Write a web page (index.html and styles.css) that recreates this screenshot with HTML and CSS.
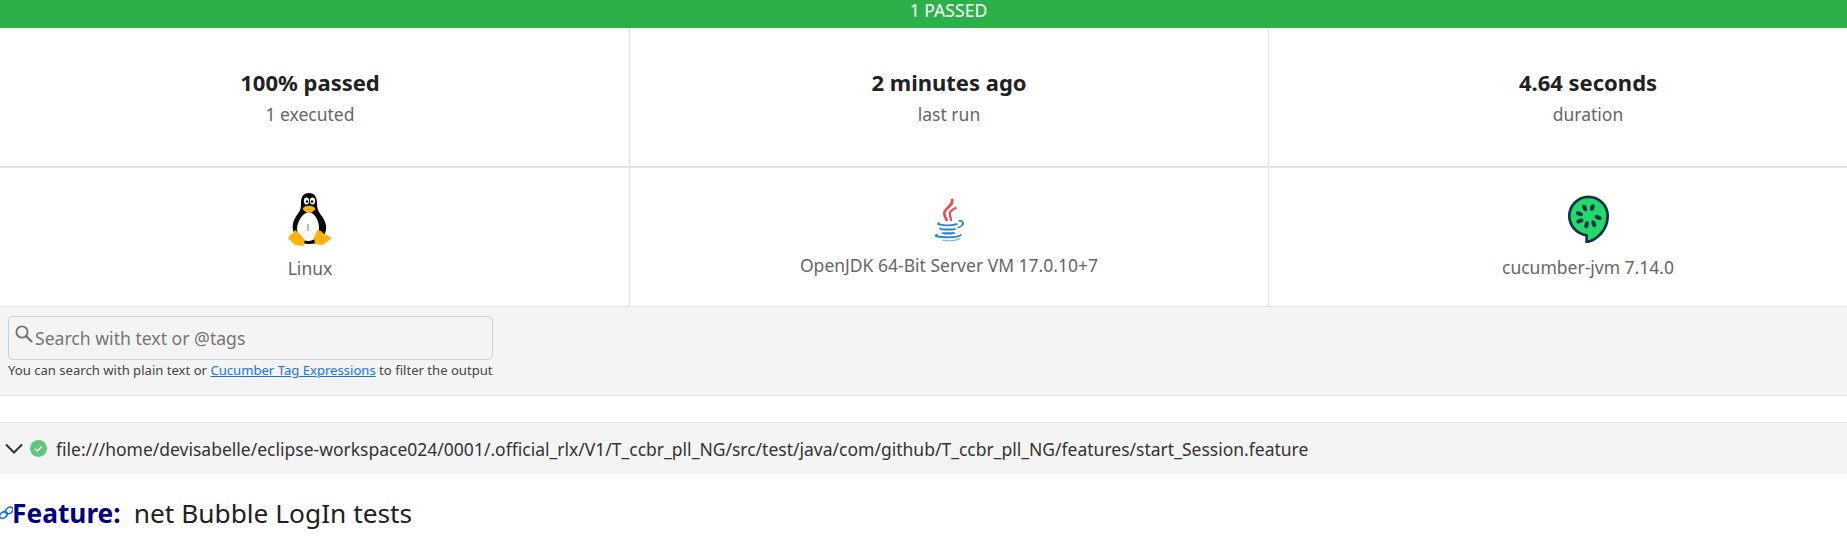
FILE: index.html
```html
<!DOCTYPE html>
<html>
<head>
<meta charset="utf-8">
<title>Cucumber report</title>
<link rel="stylesheet" href="styles.css">
</head>
<body>
<div class="status-bar">1 passed</div>

<div class="summary">
  <div class="cell cell-stat">
    <strong>100% passed</strong>
    <span>1 executed</span>
  </div>
  <div class="cell cell-stat">
    <strong>2 minutes ago</strong>
    <span>last run</span>
  </div>
  <div class="cell cell-stat">
    <strong>4.64 seconds</strong>
    <span>duration</span>
  </div>

  <div class="cell cell-env cell-linux">
    <svg class="logo" width="44" height="54" viewBox="0 0 44 54">
      <path fill="#0b0b0b" d="M21 0C14 0 13 5 13 11c0 5-1 7-4 11-3 4-5 9-4 15l3 9c3 4 9 5 13 5s11-1 14-5l3-9c1-6-2-11-5-15-3-4-4-7-4-12 0-5-2-10-8-10z"/>
      <path fill="#fff" d="M21 19c-7 1-11 9-12 16 0 8 5 13 11 13 7 0 11-5 11-13 0-7-4-15-10-16z"/>
      <ellipse fill="#fff" cx="18.5" cy="8" rx="2.6" ry="3.4"/>
      <ellipse fill="#fff" cx="24.5" cy="8" rx="2.6" ry="3.4"/>
      <circle fill="#111" cx="19" cy="8.5" r="1.3"/>
      <circle fill="#111" cx="24" cy="8.5" r="1.3"/>
      <path fill="#fbb40f" d="M15 15c3-3 9-3 12 0 1 2-4 5-6 5s-7-3-6-5z"/>
      <path fill="#fbb40f" d="M7 37l5 4 5 6-2 6-8-1-7-7 2-3 3-2z"/>
      <path fill="#fbb40f" d="M29 37l4 1 2 2 9 5-9 7-8-1-1-6z"/>
      <path fill="none" stroke="#555" stroke-width="0.8" d="M20 31v7"/>
    </svg>
    <span>Linux</span>
  </div>
  <div class="cell cell-env cell-java">
    <svg class="logo" width="34" height="44" viewBox="0 0 34 46">
      <path fill="none" stroke="#ea4a50" stroke-width="2.8" d="M20 1c3 6-8 10-8 15 0 3 2 5 3 8"/>
      <path fill="none" stroke="#ea4a50" stroke-width="2.3" d="M25 10c-5 2-8 5-7 8 0 2 2 4 1 6"/>
      <path fill="none" stroke="#2a86cf" stroke-width="1.9" d="M7 26c-3 1-1 2 3 2 6 1 13 0 16-1"/>
      <path fill="none" stroke="#2a86cf" stroke-width="1.8" d="M27 24c5-1 6 3 3 5-1 1-3 2-4 2"/>
      <path fill="none" stroke="#2a86cf" stroke-width="2" d="M8 31c-1 2 3 2 8 2 4 0 7 0 8-1"/>
      <path fill="none" stroke="#2a86cf" stroke-width="2.2" d="M10 36c0 1 3 1 6 1 3 0 6 0 7-1"/>
      <path fill="none" stroke="#2a86cf" stroke-width="1.9" d="M5 38c-6 2 2 3 11 3 8 0 13-1 14-3"/>
      <path fill="none" stroke="#7fb6df" stroke-width="1.2" d="M10 44c6 1 14 1 19-2"/>
    </svg>
    <span>OpenJDK 64-Bit Server VM 17.0.10+7</span>
  </div>
  <div class="cell cell-env cell-cucumber">
    <svg class="logo" width="43" height="48" viewBox="0 0 44 50">
      <path fill="#23d96c" stroke="#10334a" stroke-width="2.8" d="M22 2C11 2 2 11 2 22c0 10 8 19 18 20v7c11-2 22-13 22-27C42 11 33 2 22 2z"/>
      <g fill="#10334a">
        <ellipse cx="18" cy="13.5" rx="2.2" ry="3.8" transform="rotate(-25 18 13.5)"/>
        <ellipse cx="26" cy="13" rx="2.2" ry="3.8" transform="rotate(15 26 13)"/>
        <ellipse cx="12.5" cy="19.5" rx="3.8" ry="2.2" transform="rotate(20 12.5 19.5)"/>
        <ellipse cx="13" cy="27" rx="3.8" ry="2.2" transform="rotate(-20 13 27)"/>
        <ellipse cx="20" cy="31" rx="2.2" ry="3.8" transform="rotate(15 20 31)"/>
        <ellipse cx="27.5" cy="30" rx="2.2" ry="3.8" transform="rotate(-20 27.5 30)"/>
        <ellipse cx="32" cy="23.5" rx="3.8" ry="2.2" transform="rotate(20 32 23.5)"/>
      </g>
    </svg>
    <span>cucumber-jvm 7.14.0</span>
  </div>
</div>

<div class="search-area">
  <div class="search-box">
    <svg class="search-icon" width="18" height="18" viewBox="0 0 18 18">
      <circle cx="7" cy="7" r="5.6" fill="none" stroke="#777" stroke-width="1.9"/>
      <path d="M11 11l6 6" stroke="#777" stroke-width="2.4"/>
    </svg>
    <span>Search with text or @tags</span>
  </div>
  <p class="search-help">You can search with plain text or <a href="#">Cucumber Tag Expressions</a> to filter the output</p>
</div>

<div class="accordion">
  <svg class="chevron" width="18" height="11" viewBox="0 0 18 11">
    <path d="M1 1.5l8 8 8-8" fill="none" stroke="#333" stroke-width="2"/>
  </svg>
  <svg class="check" width="17" height="17" viewBox="0 0 18 18">
    <circle cx="9" cy="9" r="9" fill="#5fc77c"/>
    <path d="M5.5 9.2l2.5 2.4 4.5-4.8" fill="none" stroke="#fff" stroke-width="1.6"/>
  </svg>
  <span class="uri">file:///home/devisabelle/eclipse-workspace024/0001/.official_rlx/V1/T_ccbr_pll_NG/src/test/java/com/github/T_ccbr_pll_NG/features/start_Session.feature</span>
</div>

<h2 class="feature">
  <svg class="link-icon" width="13" height="14" viewBox="0 0 13 14">
    <g fill="none" stroke="#1a73e8" stroke-width="1.7">
      <ellipse cx="3.5" cy="9" rx="4.2" ry="2.9" transform="rotate(-35 3.5 9)"/>
      <ellipse cx="9.2" cy="4.5" rx="4.2" ry="2.9" transform="rotate(-35 9.2 4.5)"/>
    </g>
  </svg>
  <span class="keyword">Feature:</span>
  <span class="feature-name">net Bubble LogIn tests</span>
</h2>
</body>
</html>
```

FILE: styles.css
```css
* {
  box-sizing: border-box;
}

html, body {
  overflow: hidden;
}

body {
  margin: 0;
  font-family: "Noto Sans", sans-serif;
  font-size: 16px;
  color: #212121;
  background: #fff;
}

.status-bar {
  height: 28px;
  padding-left: 50px;
  line-height: 21px;
  background: #2cb14a;
  color: #fff;
  text-align: center;
  text-transform: uppercase;
  font-size: 17.6px;
}

.summary {
  display: grid;
  grid-template-columns: repeat(3, 639px);
  grid-template-rows: 140px 139px;
  margin-left: -9px;
  width: 1917px;
}

.cell {
  display: flex;
  flex-direction: column;
  align-items: center;
  border-right: 1px solid #e3e3e3;
  border-bottom: 1px solid #e3e3e3;
}

.cell-stat {
  justify-content: center;
  padding-bottom: 1px;
  border-bottom-width: 2px;
}

.cell-stat strong {
  font-size: 22px;
  line-height: 34px;
}

.cell-stat span, .cell-env span {
  font-size: 17.5px;
  line-height: 30px;
  color: #666;
}

.cell-linux {
  padding-top: 25px;
}

.cell-linux .logo {
  margin-bottom: 6px;
}

.cell-java {
  padding-top: 30px;
}

.cell-java .logo {
  margin-bottom: 8px;
}

.cell-cucumber {
  padding-top: 27px;
}

.cell-cucumber .logo {
  margin-bottom: 9px;
}

.logo {
  display: block;
}

.search-area {
  height: 89px;
  padding: 9px 8px 0;
  background: #f4f4f4;
  border-bottom: 1px solid #e3e3e3;
}

.search-box {
  display: flex;
  align-items: center;
  gap: 2px;
  width: 485px;
  height: 44px;
  padding: 0 6px;
  border: 1px solid #c8d0dc;
  border-radius: 5px;
  font-size: 17.6px;
  color: #757575;
}

.search-icon {
  margin-top: -9px;
}

.search-help {
  margin: 1px 0 0;
  font-size: 13.1px;
  line-height: 18px;
  color: #444;
}

.search-help a {
  color: #1a73e8;
}

.accordion {
  display: flex;
  align-items: center;
  height: 52px;
  margin-top: 26px;
  padding-left: 5px;
  background: #f4f4f4;
  border-top: 1px solid #e3e3e3;
}

.chevron {
  margin-right: 7px;
}

.check {
  margin-right: 9px;
}

.uri {
  font-size: 17.5px;
  color: #333;
}

.feature {
  display: flex;
  align-items: center;
  margin: 20px 0 0;
  font-size: 26.3px;
  font-weight: 400;
  line-height: 38px;
}

.link-icon {
  flex: none;
  margin-right: -1px;
}

.keyword {
  font-weight: 700;
  color: #000080;
  margin-right: 13px;
}
```
